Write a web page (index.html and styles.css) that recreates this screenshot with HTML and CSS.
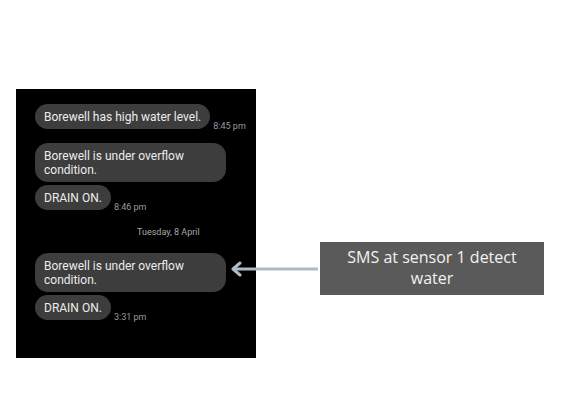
FILE: index.html
```html
<!DOCTYPE html>
<html lang="en">
<head>
    <meta charset="UTF-8">
    <title>SMS at sensor 1</title>
    <link rel="stylesheet" href="styles.css">
</head>
<body>
    <div class="canvas">
        <div class="phone">
            <div class="msg-row gap-big">
                <div class="bubble">Borewell has high water level.</div>
                <span class="time">8:45 pm</span>
            </div>
            <div class="msg-row">
                <div class="bubble wide">Borewell is under overflow condition.</div>
            </div>
            <div class="msg-row">
                <div class="bubble">DRAIN ON.</div>
                <span class="time">8:46 pm</span>
            </div>

            <div class="date">Tuesday, 8 April</div>

            <div class="msg-row">
                <div class="bubble wide">Borewell is under overflow condition.</div>
            </div>
            <div class="msg-row">
                <div class="bubble">DRAIN ON.</div>
                <span class="time">3:31 pm</span>
            </div>
        </div>

        <!-- callout pointing at the overflow message -->
        <div class="callout">
            <svg class="arrow" width="90" height="16" viewBox="0 0 90 16">
                <line x1="3" y1="8" x2="88" y2="8" stroke="#aebbc4" stroke-width="3"/>
                <polyline points="10,2 3,8 10,14" fill="none" stroke="#aebbc4" stroke-width="3" stroke-linecap="round" stroke-linejoin="round"/>
            </svg>
            <div class="note">SMS at sensor 1 detect water</div>
        </div>
    </div>
</body>
</html>
```

FILE: styles.css
```css
body {
    margin: 0;
    padding: 0;
    background-color: #ffffff;
    font-family: Roboto, "Liberation Sans", sans-serif;
}
.canvas {
    position: relative;
    width: 576px;
    height: 416px;
}
.phone {
    position: absolute;
    left: 16px;
    top: 89px;
    width: 240px;
    height: 269px;
    box-sizing: border-box;
    background-color: #000000;
    padding: 15px 0 0 19px;
    display: flex;
    flex-direction: column;
    gap: 3px;
}
.msg-row {
    display: flex;
    align-items: flex-end;
}
.gap-big {
    margin-bottom: 11px;
}
.bubble {
    background-color: #3d3d3d;
    color: #ececec;
    font-size: 12px;
    line-height: 14px;
    padding: 6px 9px 5px;
    border-radius: 13px;
    max-width: 173px;
}
.bubble.wide {
    width: 173px;
}
.time {
    color: #9b9b9b;
    font-size: 9px;
    margin-left: 3px;
    margin-bottom: -2px;
}
.date {
    color: #a8a8a8;
    font-size: 9px;
    line-height: 11px;
    padding-left: 102px;
    margin: 14px 0 12px;
}
.callout {
    position: absolute;
    left: 230px;
    top: 242px;
    display: flex;
    align-items: center;
}
.arrow {
    display: block;
}
.note {
    width: 224px;
    height: 53px;
    box-sizing: border-box;
    background-color: #5a5a5a;
    color: #f2f2f2;
    font-family: "Open Sans", sans-serif;
    font-size: 16px;
    line-height: 21px;
    text-align: center;
    padding: 5px 20px;
}
```
